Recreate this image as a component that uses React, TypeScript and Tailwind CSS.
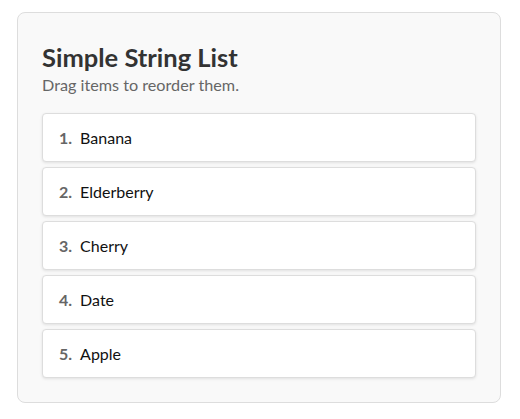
import React from "react";

const items = ["Banana", "Elderberry", "Cherry", "Date", "Apple"];

export default function App() {
  return (
    <div className="bg-white w-[520px] h-[419px] pt-3 pl-[17px]" style={{ fontFamily: 'Lato, "Open Sans", sans-serif' }}>
      <div className="w-[484px] h-[391px] border border-[#dddddd] rounded-lg bg-[#f9f9f9] px-6 pt-[30px]">
        <h2 className="text-[25.5px] leading-[28px] font-bold text-[#333333]">Simple String List</h2>
        <p className="text-[16.2px] leading-[22px] text-[#666666] mt-[3px]">Drag items to reorder them.</p>
        <ul className="mt-[17px] flex flex-col gap-[5px]">
          {items.map((it, i) => (
            <li
              key={it}
              className="h-[49px] bg-white border border-[#dddddd] rounded-[4px] shadow-[0_1px_3px_rgba(0,0,0,0.1)] flex items-center pl-4 text-[16px] text-[#111111]"
            >
              <span className="font-bold text-[#666666] mr-2">{i + 1}.</span>
              <span>{it}</span>
            </li>
          ))}
        </ul>
      </div>
    </div>
  );
}
